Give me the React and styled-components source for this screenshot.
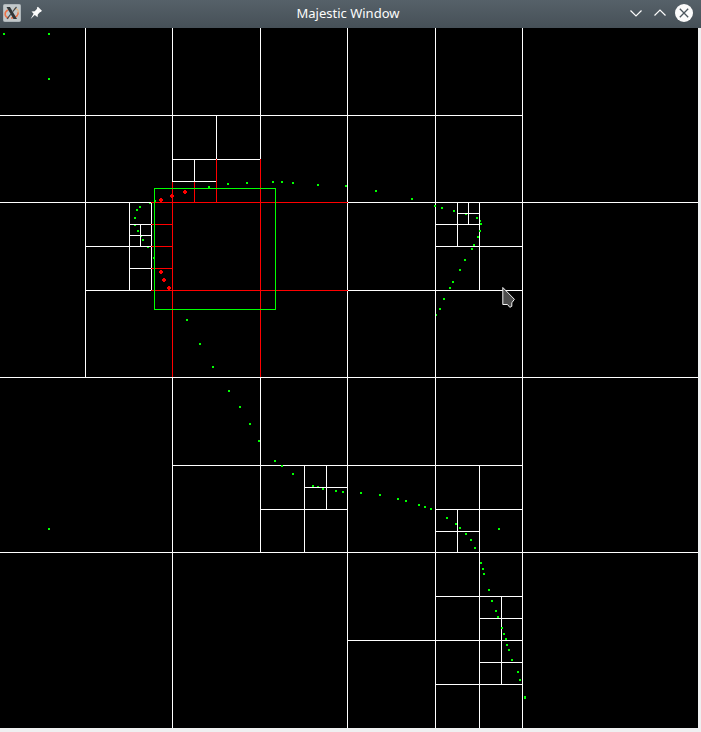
import React from "react";
import styled, { createGlobalStyle } from "styled-components";

const GlobalStyle = createGlobalStyle`
  body { margin: 0; background: #eff0f1; overflow: hidden; }
`;

const Window = styled.main`
  display: flex;
  flex-direction: column;
  width: 701px;
  height: 732px;
  background: #eff0f1;
`;

const TitleBar = styled.header`
  display: grid;
  grid-template-columns: 72px 1fr 77px;
  align-items: center;
  height: 28px;
  box-sizing: border-box;
  background: linear-gradient(#566169, #465057);
`;

const IconGroup = styled.div`
  display: flex;
  align-items: center;
  justify-content: ${(p) => (p.$end ? "flex-end" : "flex-start")};
  gap: ${(p) => (p.$end ? "6px" : "7px")};
  padding: ${(p) => (p.$end ? "0 8px 2px 0" : "0 0 2px 3px")};
`;

const Title = styled.h1`
  margin: 0;
  padding-bottom: 2px;
  text-align: center;
  font: 400 13px/18px "Noto Sans", sans-serif;
  color: #fcfcfc;
`;

const WindowIcon = styled.svg`
  display: block;
  width: 18px;
  height: 18px;
  flex: none;
`;

const Canvas = styled.svg`
  display: block;
  width: 698px;
  height: 700px;
  background: #000;
`;

// [y, x start, x end]
const whiteRows = [
  [115, 0, 522], [202, 0, 151], [202, 347, 697], [377, 0, 697], [552, 0, 697],
  [290, 85, 151], [290, 347, 522], [246, 85, 151], [246, 435, 522],
  [224, 129, 151], [224, 435, 479], [235, 129, 151], [268, 129, 151],
  [213, 457, 479], [159, 172, 260], [181, 172, 216], [465, 172, 522],
  [487, 304, 347], [509, 260, 347], [509, 435, 522], [531, 435, 479],
  [596, 435, 522], [618, 479, 522], [640, 347, 522], [662, 479, 522],
  [684, 435, 522],
];

// [x, y start, y end]
const whiteColumns = [
  [85, 28, 377], [172, 28, 181], [172, 377, 727], [216, 115, 159],
  [194, 159, 181], [260, 28, 159], [260, 377, 552], [347, 28, 727],
  [435, 28, 727], [457, 202, 246], [457, 509, 552], [468, 202, 224],
  [479, 202, 290], [479, 465, 727], [522, 28, 727], [129, 202, 290],
  [140, 224, 246], [151, 203, 290], [304, 465, 552], [326, 465, 509],
  [501, 596, 684],
];

const redRows = [
  [202, 151, 347], [290, 151, 347], [224, 151, 172], [246, 151, 172],
  [268, 151, 172],
];

const redColumns = [
  [172, 182, 376], [216, 159, 202], [194, 182, 202], [260, 159, 376],
];

// [x, y, width, height]
const points = [
  [3, 33], [48, 33], [48, 78], [48, 528], [208, 186], [227, 183], [246, 182],
  [272, 181], [281, 181], [292, 182], [317, 184], [345, 185], [375, 190],
  [411, 198], [154, 200], [149, 203, 2, 1], [139, 206], [136, 209], [134, 217],
  [134, 225, 2, 1], [137, 230], [141, 236, 1, 1], [142, 239], [147, 247, 2, 1],
  [153, 257], [434, 205], [441, 207], [453, 210], [465, 214, 2, 1], [476, 217],
  [480, 220, 1, 2], [480, 223], [479, 230], [477, 236], [473, 244], [471, 248],
  [464, 259], [459, 269], [452, 281], [449, 287], [443, 298], [439, 308],
  [436, 314, 1, 2], [186, 319], [199, 343], [212, 366], [228, 390], [239, 406],
  [249, 423], [258, 440], [274, 460], [281, 465], [292, 473], [312, 485],
  [317, 486, 2, 1], [322, 488], [335, 490], [342, 491], [360, 492], [379, 494],
  [397, 498], [405, 500], [418, 504], [424, 506], [430, 508], [446, 517],
  [455, 523], [459, 527], [465, 533], [470, 539], [474, 547], [480, 562],
  [482, 568], [483, 573], [488, 589], [498, 528], [491, 600], [495, 610],
  [497, 616], [501, 627], [503, 633], [505, 638], [506, 644], [508, 649],
  [511, 659], [517, 671], [519, 679], [524, 696, 2, 3],
];

const hits = [[161, 200], [172, 196], [185, 192], [161, 272], [164, 280], [169, 288]];

const rowPath = (rows) => rows.map(([y, a, b]) => `M${a} ${y + 0.5}H${b + 1}`).join("");
const columnPath = (cols) => cols.map(([x, a, b]) => `M${x + 0.5} ${a}V${b + 1}`).join("");

function QuadTree() {
  return (
    <Canvas viewBox="0 28 698 700" shapeRendering="crispEdges">
      <path d={rowPath(whiteRows) + columnPath(whiteColumns)} stroke="#fff" />
      <path d={rowPath(redRows) + columnPath(redColumns)} stroke="#f00" />
      {points.map(([x, y, w = 2, h = 2]) => (
        <rect key={`${x}-${y}`} x={x} y={y} width={w} height={h} fill="#0f0" />
      ))}
      {hits.map(([x, y]) => (
        <path key={`${x}-${y}`} d={`M${x - 1} ${y - 2}h2v1h1v2h-1v1h-2v-1h-1v-2h1z`} fill="#f00" />
      ))}
      <rect x="154.5" y="188.5" width="121" height="121" fill="none" stroke="#0f0" />
      <path
        d="M502.8 287.5V304.5H507.5L509.8 307.3L511.8 306.3V302.8L514.4 299.3Z"
        fill="#4d4d4d"
        stroke="#f2f2f2"
        strokeLinejoin="round"
        shapeRendering="auto"
      />
    </Canvas>
  );
}

function XIcon() {
  return (
    <WindowIcon viewBox="0 0 18 18">
      <rect x=".5" y=".5" width="17" height="17" rx="1" fill="#c3c9cb" stroke="#aeb6ba" />
      <path d="M5 6C1 8 1 13 6 14M8 14C13 14 16 11 15 8" fill="none" stroke="#ee7044" strokeWidth="1.5" />
      <path d="M11 4.5C14 4.5 16 6 15 9" fill="none" stroke="#e7b47c" strokeWidth="1.2" />
      <path d="M3.5 3H7L14 15H10.5Z" fill="#303638" />
      <path d="M13.5 3L9.7 7.7M7.8 10.2L4 15" fill="none" stroke="#454b4e" strokeWidth="1.2" />
    </WindowIcon>
  );
}

function PinIcon() {
  return (
    <WindowIcon viewBox="0 0 18 18">
      <g transform="translate(-0.6 0.3)">
        <path d="M9.7 3.1L14 7.4L12.5 7.9L10.4 10.1L10.2 13L7.4 10.6L3.2 14.6L6.2 9.4L4.1 7.1L7.3 7L9.5 4.7Z" fill="#fcfcfc" />
        <path d="M10 3L14 7" stroke="#fcfcfc" strokeWidth="1.6" />
      </g>
    </WindowIcon>
  );
}

export default function App() {
  return (
    <Window>
      <GlobalStyle />
      <TitleBar>
        <IconGroup>
          <XIcon />
          <PinIcon />
        </IconGroup>
        <Title>Majestic Window</Title>
        <IconGroup $end>
          <WindowIcon viewBox="0 0 18 18">
            <path d="M3.5 6.5L9 12L14.5 6.5" fill="none" stroke="#fcfcfc" strokeWidth="1.2" />
          </WindowIcon>
          <WindowIcon viewBox="0 0 18 18">
            <path d="M3.5 11.5L9 6L14.5 11.5" fill="none" stroke="#fcfcfc" strokeWidth="1.2" />
          </WindowIcon>
          <WindowIcon viewBox="0 0 18 18">
            <circle cx="9" cy="9" r="9" fill="#fcfcfc" />
            <path d="M4.8 4.8L13.2 13.2M13.2 4.8L4.8 13.2" stroke="#4d575f" strokeWidth="1.3" />
          </WindowIcon>
        </IconGroup>
      </TitleBar>
      <QuadTree />
    </Window>
  );
}
